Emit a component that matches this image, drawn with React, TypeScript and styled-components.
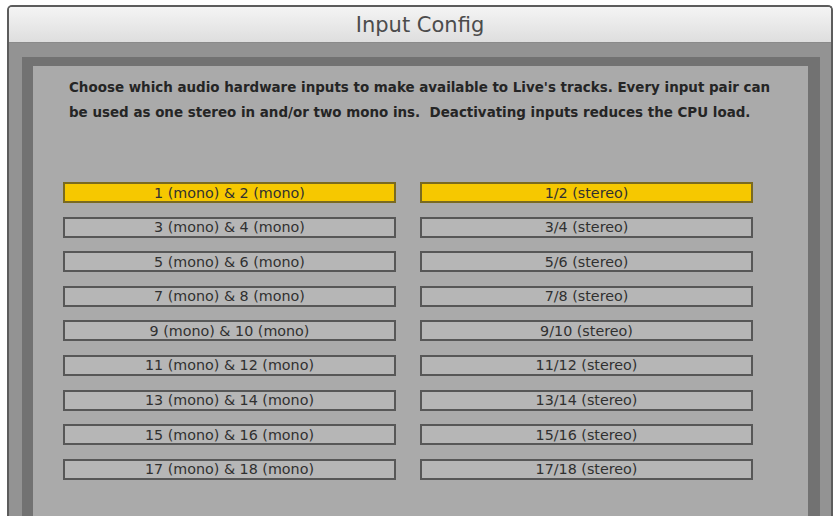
import styled, { createGlobalStyle } from "styled-components";

const GlobalStyle = createGlobalStyle`
  html, body {
    margin: 0;
    padding: 0;
    background: #ffffff;
  }
`;

const Window = styled.div`
  margin: 5px 7px 0 7px;
  height: 511px;
  display: flex;
  flex-direction: column;
  border: 2px solid #5c5c5c;
  border-bottom: none;
  border-radius: 5px 5px 0 0;
  overflow: hidden;
  box-sizing: border-box;
`;

const TitleBar = styled.div`
  height: 35px;
  flex-shrink: 0;
  display: flex;
  align-items: center;
  justify-content: center;
  background: linear-gradient(#f4f4f4, #dedede);
  border-bottom: 1px solid #8a8a8a;
  font-family: "DejaVu Sans", sans-serif;
  font-size: 21px;
  color: #4c4c4c;
`;

const Frame = styled.div`
  flex: 1;
  display: flex;
  background: #939393;
  padding: 14px 11px 0 13px;
`;

const Panel = styled.div`
  flex: 1;
  display: flex;
  flex-direction: column;
  background: #aaaaaa;
  border-style: solid;
  border-color: #727272;
  border-width: 9px 12px 0 11px;
  padding: 9px 0 0 30px;
`;

const Intro = styled.p`
  margin: 0 0 0 6px;
  font-family: "DejaVu Sans", sans-serif;
  font-weight: bold;
  font-size: 13.45px;
  line-height: 25px;
  color: #252525;
  white-space: nowrap;
`;

const Grid = styled.div`
  margin-top: 57px;
  display: grid;
  grid-template-columns: 333px 333px;
  column-gap: 24px;
  row-gap: 13.6px;
`;

const Toggle = styled.div<{ $on?: boolean }>`
  height: 21px;
  box-sizing: border-box;
  display: flex;
  align-items: center;
  justify-content: center;
  background: ${(p) => (p.$on ? "#f6c800" : "#b6b6b6")};
  border: 2px solid ${(p) => (p.$on ? "#7a6a20" : "#575757")};
  font-family: "DejaVu Sans", sans-serif;
  font-size: 14.3px;
  color: #303030;
`;

const pairs = Array.from({ length: 9 }, (_, i) => 2 * i + 1);

export default function App() {
  return (
    <>
      <GlobalStyle />
      <Window>
        <TitleBar>Input Config</TitleBar>
        <Frame>
          <Panel>
            <Intro>
              Choose which audio hardware inputs to make available to Live's tracks. Every input pair can
              <br />
              be used as one stereo in and/or two mono ins.&nbsp; Deactivating inputs reduces the CPU load.
            </Intro>
            <Grid>
              {pairs.map((n) => [
                <Toggle key={`m${n}`} $on={n === 1}>
                  {n} (mono) &amp; {n + 1} (mono)
                </Toggle>,
                <Toggle key={`s${n}`} $on={n === 1}>
                  {n}/{n + 1} (stereo)
                </Toggle>,
              ])}
            </Grid>
          </Panel>
        </Frame>
      </Window>
    </>
  );
}
